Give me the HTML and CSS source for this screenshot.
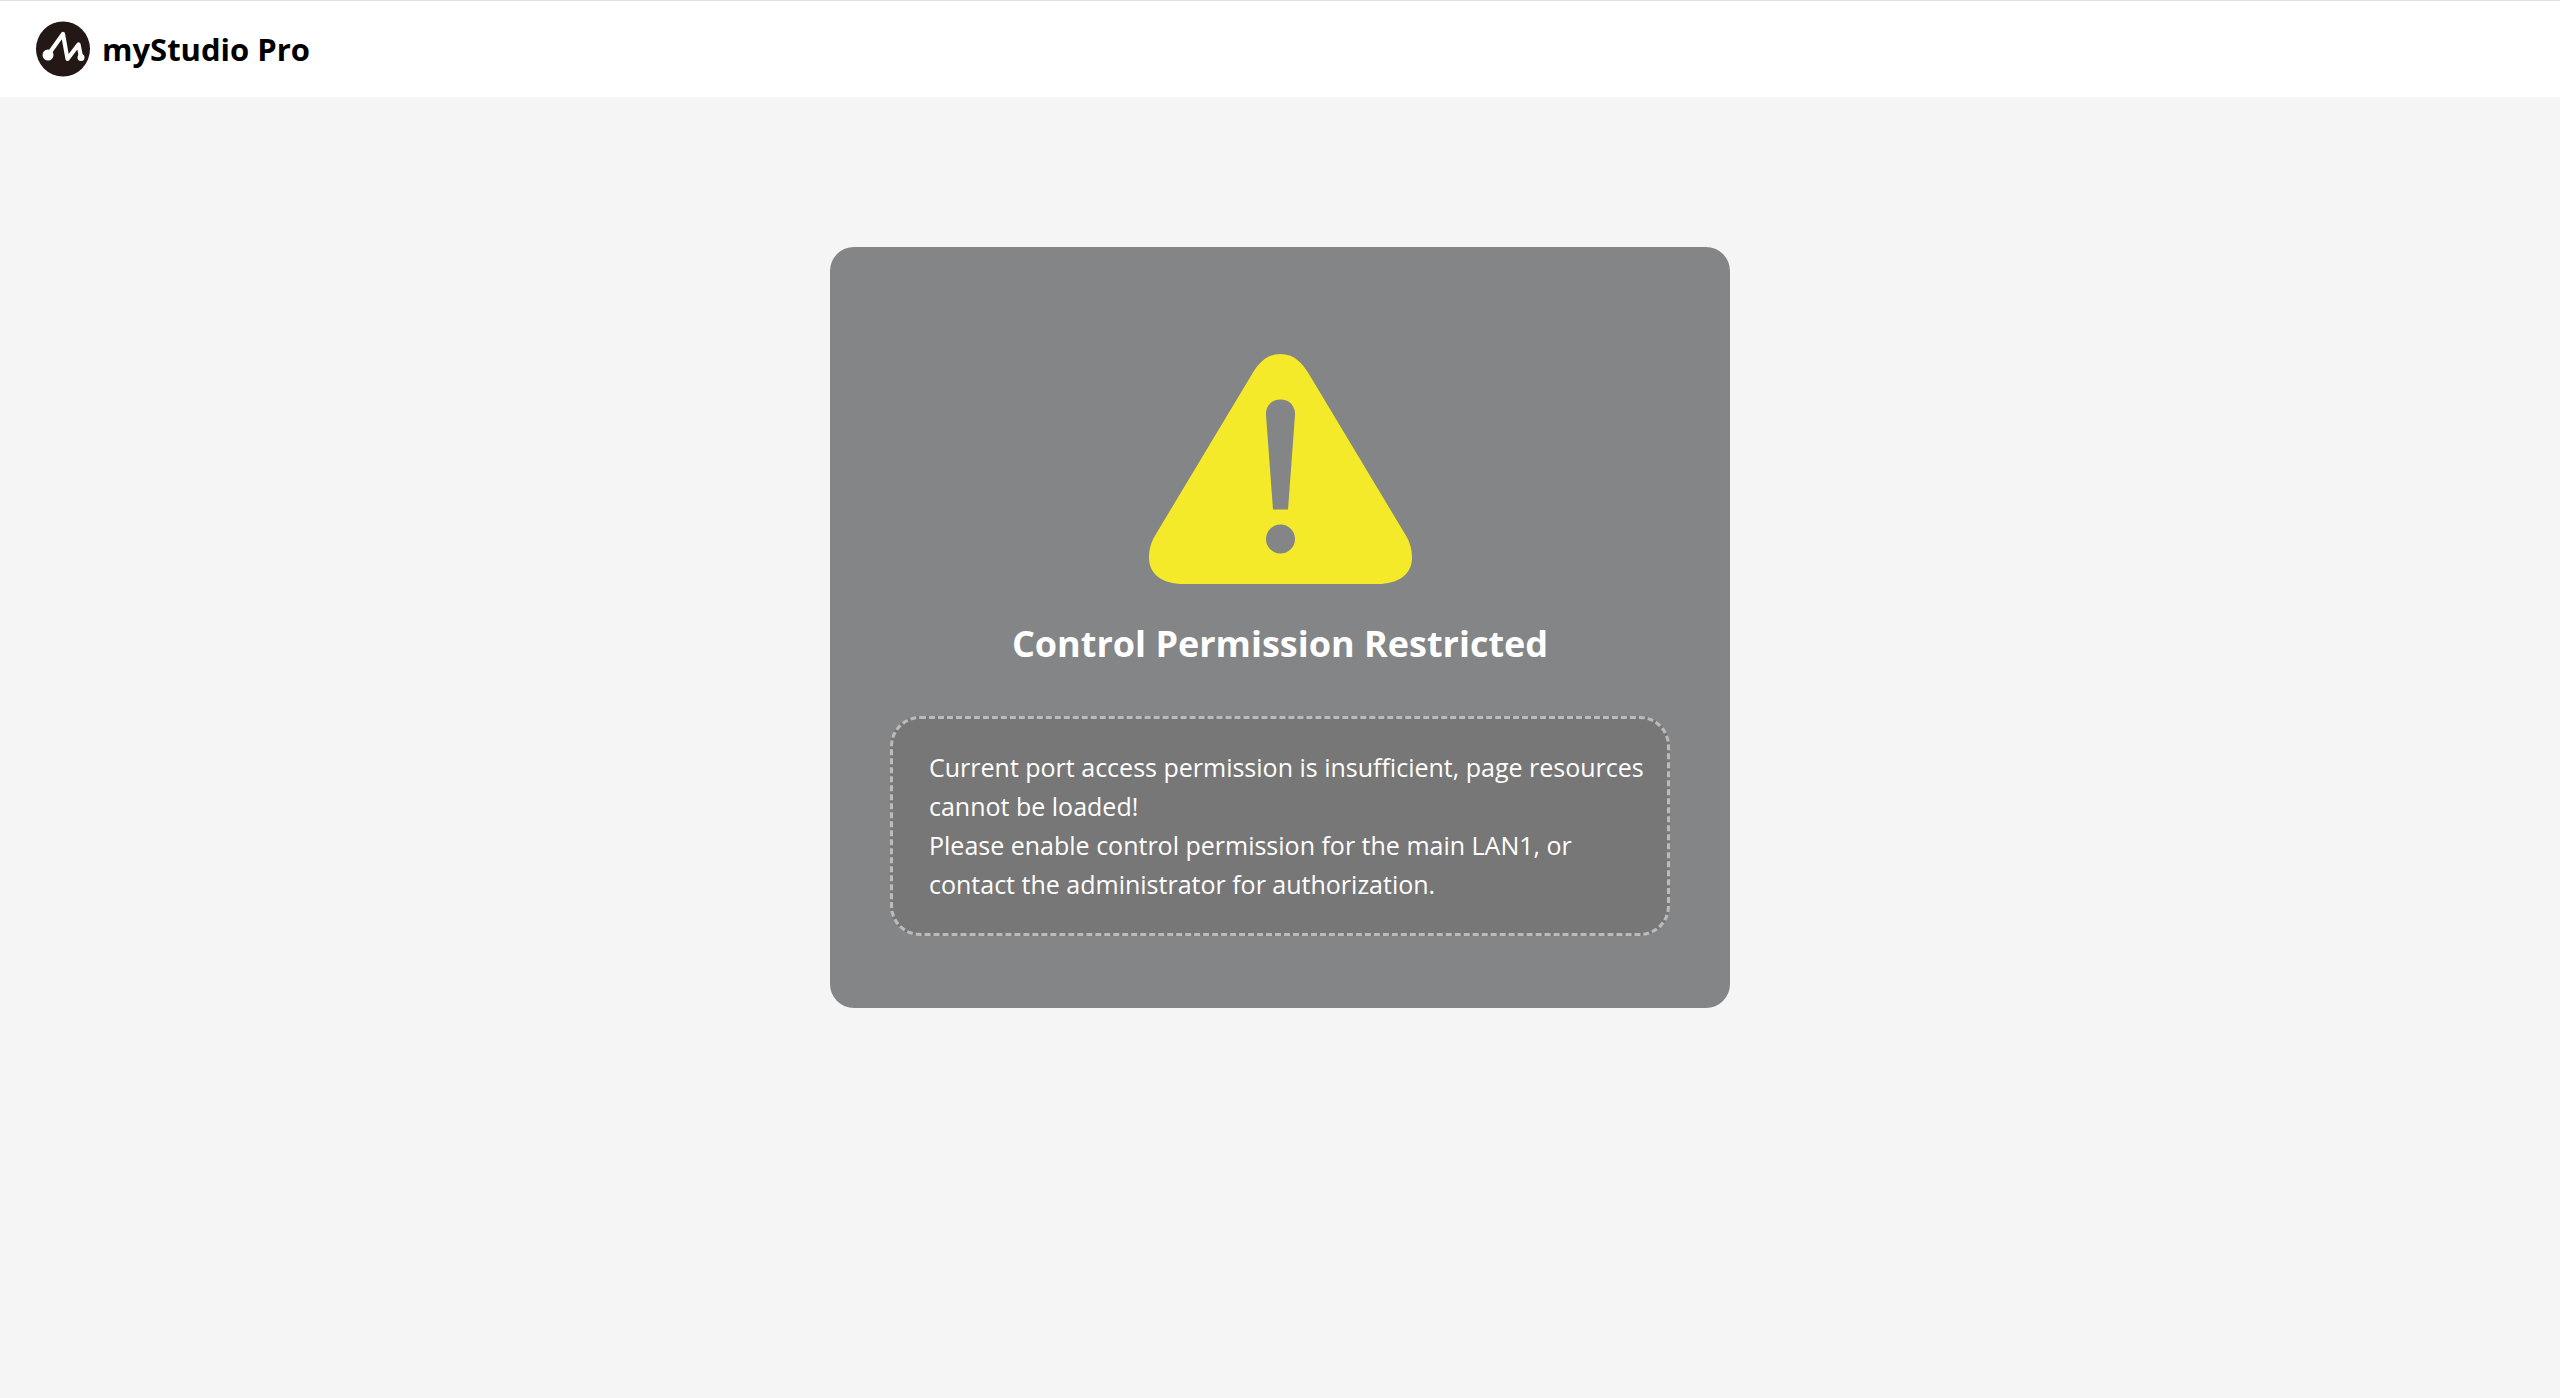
FILE: index.html
```html
<!DOCTYPE html>
<html lang="en">
<head>
    <meta charset="UTF-8">
    <meta name="viewport" content="width=device-width, initial-scale=1.0">
    <title>myStudio Pro</title>
    <link rel="stylesheet" href="styles.css">
</head>
<body>
    <header class="header">
        <svg class="logo" viewBox="0 0 54 56" aria-hidden="true">
            <ellipse cx="27" cy="28" rx="27" ry="27.5" fill="#231815"/>
            <path d="M12 34 L27 13 L31.500 38 L42.500 23.500 L45 36" fill="none" stroke="#fff" stroke-width="4.200" stroke-linejoin="round" stroke-linecap="round"/>
            <circle cx="12" cy="34" r="5.500" fill="#fff"/>
            <circle cx="45" cy="36.500" r="3.500" fill="#fff"/>
        </svg>
        <h1 class="brand">myStudio Pro</h1>
    </header>
    <main class="container">
        <section class="card">
            <svg class="warning-icon" viewBox="0 0 263 230" role="img" aria-label="Warning">
                <path fill="#f4ea2a" fill-rule="evenodd" d="M131.500 0 C145 0 153 9 159 18.500 L256 180 C261 188 263 195 263 204 C263 221 248 230 229 230 H34 C15 230 0 221 0 204 C0 195 2 188 7 180 L104 18.500 C110 9 118 0 131.500 0 Z M131.500 45.500 C122.500 45.500 116.500 52 117 61 L124 155.500 H139 L146 61 C146.500 52 140.500 45.500 131.500 45.500 Z M131.500 170.500 A14.500 14.500 0 1 0 131.500 199.500 A14.500 14.500 0 1 0 131.500 170.500 Z"/>
            </svg>
            <h2 class="title">Control Permission Restricted</h2>
            <div class="message">
                <p>Current port access permission is insufficient, page resources cannot be loaded!</p>
                <p>Please enable control permission for the main LAN1, or contact the administrator for authorization.</p>
            </div>
        </section>
    </main>
</body>
</html>
```
FILE: styles.css
```css
body {
    font-family: "Segoe UI", "Open Sans", "Noto Sans", sans-serif;
    margin: 0;
    background-color: #f5f5f5;
}
.header {
    display: flex;
    align-items: center;
    gap: 12px;
    height: 96px;
    padding: 0 36px;
    border-top: 1px solid #e0e0e0;
    background-color: #fff;
}
.logo {
    width: 54px;
    height: 56px;
}
.brand {
    margin: 0;
    font-size: 31px;
    line-height: 44px;
    color: #000;
}
.container {
    display: flex;
    justify-content: center;
    padding: 150px 20px 60px;
}
.card {
    box-sizing: border-box;
    width: 100%;
    max-width: 900px;
    padding: 107px 60px 72px;
    border-radius: 24px;
    background-color: #848586;
    color: #fff;
}
.warning-icon {
    display: block;
    width: 263px;
    height: 230px;
    margin: 0 auto 32px;
}
.title {
    margin: 0 0 44px;
    font-size: 36px;
    line-height: 56px;
    text-align: center;
}
.message {
    padding: 29px 12px 29px 36px;
    border: 3px dashed #bbb;
    border-radius: 30px;
    background-color: #777;
    font-size: 25px;
    line-height: 39px;
}
.message p {
    margin: 0;
}
```
